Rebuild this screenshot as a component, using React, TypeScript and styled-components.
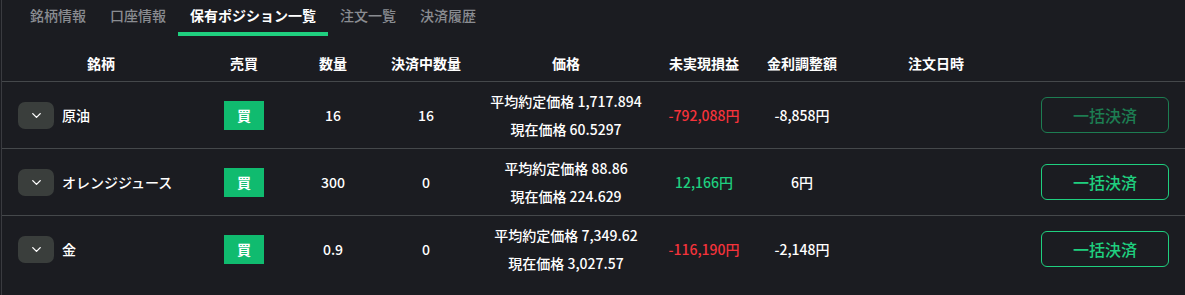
import styled, { createGlobalStyle } from 'styled-components'
import { ChevronDown } from 'lucide-react'

const colors = {
  background: '#1b1c21',
  line: '#45484b',
  sideLine: '#3a3b40',
  text: '#ffffff',
  muted: '#8a8c91',
  green: '#1fcf7f',
  greenDim: '#1d7d52',
  badge: '#10bb6f',
  red: '#f5333b',
  chip: '#3a3e3c',
}

type Position = {
  name: string
  side: string
  qty: string
  settling: string
  avgPrice: string
  nowPrice: string
  pnl: string
  pnlTone: 'plus' | 'minus'
  swap: string
  orderedAt: string
  disabled: boolean
}

const tabs = ['銘柄情報', '口座情報', '保有ポジション一覧', '注文一覧', '決済履歴']
const activeTab = '保有ポジション一覧'

const headers = ['銘柄', '売買', '数量', '決済中数量', '価格', '未実現損益', '金利調整額', '注文日時', '']

const positions: Position[] = [
  {
    name: '原油',
    side: '買',
    qty: '16',
    settling: '16',
    avgPrice: '1,717.894',
    nowPrice: '60.5297',
    pnl: '-792,088円',
    pnlTone: 'minus',
    swap: '-8,858円',
    orderedAt: '',
    disabled: true,
  },
  {
    name: 'オレンジジュース',
    side: '買',
    qty: '300',
    settling: '0',
    avgPrice: '88.86',
    nowPrice: '224.629',
    pnl: '12,166円',
    pnlTone: 'plus',
    swap: '6円',
    orderedAt: '',
    disabled: false,
  },
  {
    name: '金',
    side: '買',
    qty: '0.9',
    settling: '0',
    avgPrice: '7,349.62',
    nowPrice: '3,027.57',
    pnl: '-116,190円',
    pnlTone: 'minus',
    swap: '-2,148円',
    orderedAt: '',
    disabled: false,
  },
]

const GlobalStyle = createGlobalStyle`
  html, body {
    margin: 0;
    padding: 0;
    background: ${colors.background};
  }

  body {
    font-family: 'Noto Sans CJK JP', 'Noto Sans', sans-serif;
    color: ${colors.text};
  }
`

export default function App() {
  return (
    <Page>
      <GlobalStyle />
      <Tabs>
        {tabs.map((tab) => (
          <Tab key={tab} isActive={tab === activeTab}>
            {tab}
          </Tab>
        ))}
      </Tabs>

      <Table>
        <HeaderRow>
          {headers.map((label, i) => (
            <HeaderCell key={i}>{label}</HeaderCell>
          ))}
        </HeaderRow>

        {positions.map((p) => (
          <Row key={p.name}>
            <NameCell>
              <Toggle>
                <ChevronDown size={15} strokeWidth={2.2} />
              </Toggle>
              <span>{p.name}</span>
            </NameCell>
            <Cell>
              <SideBadge>{p.side}</SideBadge>
            </Cell>
            <Cell>{p.qty}</Cell>
            <Cell>{p.settling}</Cell>
            <PriceCell>
              <div>平均約定価格 {p.avgPrice}</div>
              <div>現在価格 {p.nowPrice}</div>
            </PriceCell>
            <Cell>
              <Pnl tone={p.pnlTone}>{p.pnl}</Pnl>
            </Cell>
            <Cell>{p.swap}</Cell>
            <Cell>{p.orderedAt}</Cell>
            <ActionCell>
              <SettleButton disabled={p.disabled}>一括決済</SettleButton>
            </ActionCell>
          </Row>
        ))}
      </Table>
    </Page>
  )
}

const columns = '198px 88px 90px 96px 184px 92px 104px 164px 1fr'

const Page = styled.div`
  margin-left: 1px;
  border-left: 1px solid ${colors.sideLine};
  min-height: 295px;
  box-sizing: border-box;
  background: ${colors.background};
`

const Tabs = styled.div`
  display: flex;
  padding-left: 16px;
`

const Tab = styled.div<{ isActive: boolean }>`
  height: 32px;
  line-height: 30px;
  padding: 0 12px;
  font-size: 14px;
  font-weight: ${({ isActive }) => (isActive ? 700 : 500)};
  color: ${({ isActive }) => (isActive ? colors.text : colors.muted)};
  border-bottom: 4px solid ${({ isActive }) => (isActive ? colors.green : 'transparent')};
  cursor: pointer;
`

const Table = styled.div`
  margin-top: 8px;
`

const HeaderRow = styled.div`
  display: grid;
  grid-template-columns: ${columns};
  height: 37px;
  align-items: center;
  border-bottom: 1px solid ${colors.line};
`

const HeaderCell = styled.div`
  text-align: center;
  font-size: 14px;
  font-weight: 700;
`

const Row = styled.div`
  display: grid;
  grid-template-columns: ${columns};
  height: 66px;
  align-items: center;
  border-bottom: 1px solid ${colors.line};
  font-weight: 500;

  &:last-child {
    border-bottom-color: transparent;
  }
`

const Cell = styled.div`
  display: flex;
  justify-content: center;
  align-items: center;
  font-size: 14px;
`

const NameCell = styled.div`
  display: flex;
  align-items: center;
  gap: 8px;
  padding-left: 16px;
  font-size: 14px;
`

const Toggle = styled.div`
  width: 36px;
  height: 27px;
  border-radius: 7px;
  background: ${colors.chip};
  display: flex;
  align-items: center;
  justify-content: center;
  color: #ffffff;
`

const SideBadge = styled.div`
  width: 40px;
  height: 29px;
  display: flex;
  align-items: center;
  justify-content: center;
  background: ${colors.badge};
  font-size: 14px;
  font-weight: 700;
  color: #ffffff;
`

const PriceCell = styled.div`
  text-align: center;
  font-size: 14px;
  line-height: 28px;
`

const Pnl = styled.span<{ tone: 'plus' | 'minus' }>`
  color: ${({ tone }) => (tone === 'plus' ? colors.green : colors.red)};
`

const ActionCell = styled.div`
  display: flex;
  justify-content: flex-end;
  padding-right: 16px;
`

const SettleButton = styled.button`
  width: 128px;
  height: 36px;
  border-radius: 6px;
  background: transparent;
  border: 1px solid ${({ disabled }) => (disabled ? colors.greenDim : colors.green)};
  color: ${({ disabled }) => (disabled ? colors.greenDim : colors.green)};
  font-family: inherit;
  font-size: 16px;
  font-weight: 500;
  cursor: ${({ disabled }) => (disabled ? 'default' : 'pointer')};
`
